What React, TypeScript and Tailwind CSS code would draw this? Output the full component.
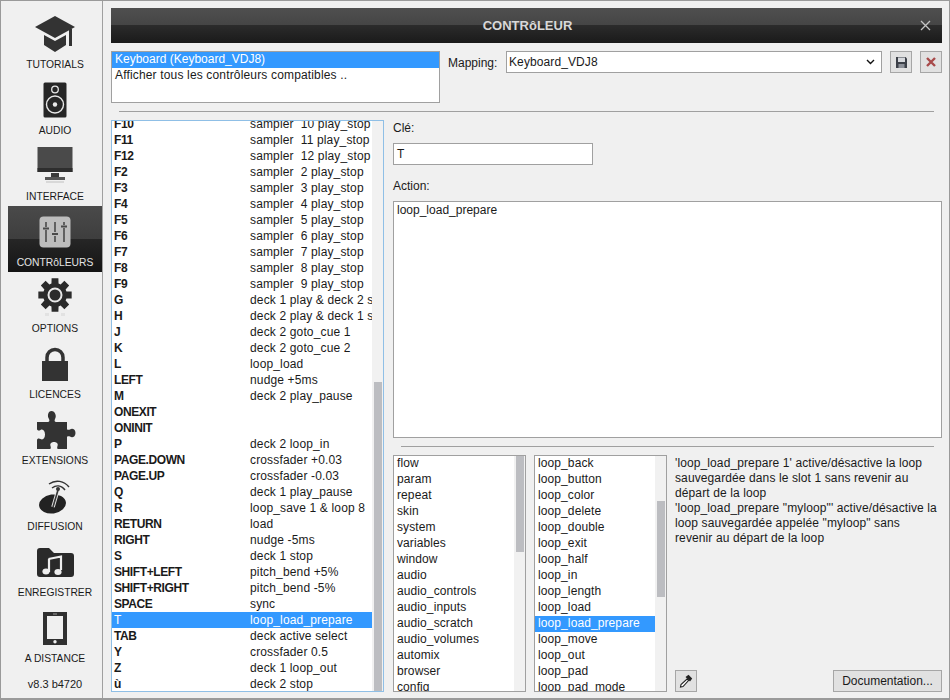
import type { ReactNode } from "react";

const keyRows: [string, string][] = [
	["F10", "sampler  10 play_stop"],
	["F11", "sampler  11 play_stop"],
	["F12", "sampler  12 play_stop"],
	["F2", "sampler  2 play_stop"],
	["F3", "sampler  3 play_stop"],
	["F4", "sampler  4 play_stop"],
	["F5", "sampler  5 play_stop"],
	["F6", "sampler  6 play_stop"],
	["F7", "sampler  7 play_stop"],
	["F8", "sampler  8 play_stop"],
	["F9", "sampler  9 play_stop"],
	["G", "deck 1 play & deck 2 stop"],
	["H", "deck 2 play & deck 1 stop"],
	["J", "deck 2 goto_cue 1"],
	["K", "deck 2 goto_cue 2"],
	["L", "loop_load"],
	["LEFT", "nudge +5ms"],
	["M", "deck 2 play_pause"],
	["ONEXIT", ""],
	["ONINIT", ""],
	["P", "deck 2 loop_in"],
	["PAGE.DOWN", "crossfader +0.03"],
	["PAGE.UP", "crossfader -0.03"],
	["Q", "deck 1 play_pause"],
	["R", "loop_save 1 & loop 8"],
	["RETURN", "load"],
	["RIGHT", "nudge -5ms"],
	["S", "deck 1 stop"],
	["SHIFT+LEFT", "pitch_bend +5%"],
	["SHIFT+RIGHT", "pitch_bend -5%"],
	["SPACE", "sync"],
	["T", "loop_load_prepare"],
	["TAB", "deck active select"],
	["Y", "crossfader 0.5"],
	["Z", "deck 1 loop_out"],
	["ù", "deck 2 stop"],
];

const groups = ["flow", "param", "repeat", "skin", "system", "variables", "window", "audio", "audio_controls", "audio_inputs", "audio_scratch", "audio_volumes", "automix", "browser", "config"];

const verbs = ["loop_back", "loop_button", "loop_color", "loop_delete", "loop_double", "loop_exit", "loop_half", "loop_in", "loop_length", "loop_load", "loop_load_prepare", "loop_move", "loop_out", "loop_pad", "loop_pad_mode"];

const dark = "#333333";

const gearPath = (() => {
	let d = "";
	for (let i = 0; i < 8; i++) {
		const a = (i * Math.PI) / 4;
		const pts: [number, number][] = [
			[a - 0.3, 12],
			[a - 0.2, 17],
			[a + 0.2, 17],
			[a + 0.3, 12],
		];
		pts.forEach(([t, r]) => {
			d += `${d ? "L" : "M"}${(17 + r * Math.sin(t)).toFixed(2)} ${(17 - r * Math.cos(t)).toFixed(2)}`;
		});
	}
	return d + "Z";
})();

const navItems: { label: string; icon: ReactNode; active?: boolean }[] = [
	{
		label: "TUTORIALS",
		icon: (
			<svg width="40" height="36" viewBox="0 0 40 36">
				<path d="M20 0 40 11 20 22 0 11Z" fill={dark} />
				<path d="M9 19 20 25 31 19V29L20 36 9 29Z" fill={dark} />
				<rect x="34" y="13" width="3" height="17" fill={dark} />
			</svg>
		),
	},
	{
		label: "AUDIO",
		icon: (
			<svg width="24" height="36" viewBox="0 0 24 36">
				<rect width="23" height="35" x="0.5" y="0.5" rx="1.5" fill="#262626" />
				<circle cx="12" cy="7.5" r="3.3" fill="none" stroke="#e8e8e8" strokeWidth="1.3" />
				<circle cx="12" cy="22.5" r="8.5" fill="none" stroke="#e8e8e8" strokeWidth="1.4" />
				<circle cx="12" cy="22.5" r="2.2" fill="#e8e8e8" />
			</svg>
		),
	},
	{
		label: "INTERFACE",
		icon: (
			<svg width="36" height="38" viewBox="0 0 36 38">
				<rect x="0.5" y="0" width="35" height="25" fill="#4a4a4a" />
				<rect x="0.5" y="21" width="35" height="4" fill="#2e2e2e" />
				<rect x="14" y="26" width="8" height="4" fill="#3a3a3a" />
				<rect x="8" y="30" width="20" height="3" fill="#555555" />
				<rect x="9" y="34" width="18" height="2" fill="#d8d8d8" />
			</svg>
		),
	},
	{
		label: "CONTRôLEURS",
		active: true,
		icon: (
			<svg width="32" height="32" viewBox="0 0 32 32">
				<rect width="31" height="31" x="0.5" y="0.5" rx="4" fill="#bdbdbd" />
				<g stroke="#4a4a4a" strokeWidth="1.6">
					<path d="M7 6v5M7 14v12M16 6v10M16 20v6M25 6v3M25 12v14" />
					<path d="M4 12.500h6M13 18h6M22 10.500h6" strokeWidth="2.200" />
				</g>
			</svg>
		),
	},
	{
		label: "OPTIONS",
		icon: (
			<svg width="34" height="40" viewBox="0 0 34 40">
				<path d={gearPath} fill="#2b2b2b" />
				<circle cx="17" cy="17" r="10" fill="#2b2b2b" />
				<circle cx="17" cy="17" r="6.500" fill="none" stroke="#e8e8e8" strokeWidth="2" />
				<rect x="7" y="35" width="4" height="3" fill="#e2e2e2" />
				<rect x="23" y="35" width="4" height="3" fill="#e2e2e2" />
			</svg>
		),
	},
	{
		label: "LICENCES",
		icon: (
			<svg width="28" height="34" viewBox="0 0 28 34">
				<path d="M6 15V10.500a8 8 0 0 1 16 0V15" fill="none" stroke="#333333" strokeWidth="3.500" />
				<rect x="1" y="14" width="26" height="20" fill={dark} />
			</svg>
		),
	},
	{
		label: "EXTENSIONS",
		icon: (
			<svg width="42" height="40" viewBox="0 0 42 40">
				<path
					d="M3 12H14C15 12 16 11 15 9 13 6 14 1 17.500 1 21 1 23 6 21 9 20 11 21 12 22 12H33V19C33 20 35 20 36 19.500 38 18 41.500 19 41.500 23 41.500 27 38 28 36 26.500 35 26 33 26 33 27V39H24C23 39 23 37.500 23.500 36 24.500 33 22 32 20 32 18 32 15.500 33 16.500 36 17 37.500 17 39 16 39H3V30C3 28.500 5 28 6.500 29 9 30.500 11 28 11 24.500 11 21 9 18.500 6.500 20 5 21 3 20.500 3 19Z"
					fill={dark}
				/>
			</svg>
		),
	},
	{
		label: "DIFFUSION",
		icon: (
			<svg width="34" height="38" viewBox="0 0 34 38">
				<ellipse cx="14.500" cy="27" rx="13.500" ry="9.500" fill="#222222" transform="rotate(-8 14.500 27)" />
				<path d="M15 30 20 13" stroke="#e8e8e8" strokeWidth="3.500" />
				<path d="M15 30 20 13" stroke="#333333" strokeWidth="1.600" />
				<circle cx="20" cy="12" r="2" fill="#333333" />
				<path d="M11 7C18 2 26 4 31 10" fill="none" stroke="#333333" strokeWidth="1.500" />
				<path d="M14 11C18 8 23 8 27 13" fill="none" stroke="#333333" strokeWidth="1.500" />
			</svg>
		),
	},
	{
		label: "ENREGISTRER",
		icon: (
			<svg width="37" height="29" viewBox="0 0 37 29">
				<path d="M0 3Q0 0 3 0H12L17 5H34Q37 5 37 8V26Q37 29 34 29H3Q0 29 0 26Z" fill="#2a2a2a" />
				<path d="M11.500 11 24 8.500V22" fill="none" stroke="#eeeeee" strokeWidth="2.200" />
				<path d="M12 11V24" stroke="#eeeeee" strokeWidth="2.200" />
				<ellipse cx="9" cy="23.500" rx="3.600" ry="3" fill="#eeeeee" />
				<ellipse cx="21" cy="24" rx="3.600" ry="3" fill="#eeeeee" />
			</svg>
		),
	},
	{
		label: "A DISTANCE",
		icon: (
			<svg width="24" height="33" viewBox="0 0 24 33">
				<rect width="24" height="33" fill="#303030" />
				<rect x="4" y="4" width="16" height="23" fill="#f0f0f0" />
				<circle cx="12" cy="29.800" r="1.700" fill="#f0f0f0" />
				<rect x="10" y="1.500" width="4" height="1" fill="#999999" />
			</svg>
		),
	},
];

function NavItem({ label, icon, active }: { label: string; icon: ReactNode; active?: boolean }) {
	return (
		<div
			className={`flex h-[66px] flex-col items-center justify-between pb-[3px] text-[10.3px] leading-[13px] ${
				active ? "bg-[linear-gradient(#4a4a4a_0,#3e3e3e_50%,#262626_50%,#141414_100%)] text-[#e4e4e4]" : "text-[#1a1a1a]"
			}`}
		>
			<div className="flex h-[48px] items-center justify-center pt-[4px]">{icon}</div>
			<span>{label}</span>
		</div>
	);
}

function Scrollbar({ top, height }: { top: number; height: number }) {
	return (
		<div className="w-[11px] shrink-0 bg-[#f1f1f1] pl-[2px] pr-[1px]">
			<div className="bg-[#bcbdc1]" style={{ marginTop: top, height }} />
		</div>
	);
}

function SimpleList({ items, selected, thumbTop, thumbHeight }: { items: string[]; selected?: string; thumbTop: number; thumbHeight: number }) {
	return (
		<div className="flex h-[237px] w-[133px] overflow-hidden border border-[#a0a0a0] bg-white tracking-[0.1px]">
			<div className="min-w-0 flex-1">
				{items.map((item) => (
					<div key={item} className={`h-[16px] pl-[3px] leading-[15px] ${item === selected ? "bg-[#3399ff] text-white" : ""}`}>
						{item}
					</div>
				))}
			</div>
			<Scrollbar top={thumbTop} height={thumbHeight} />
		</div>
	);
}

function SquareButton({ children }: { children: ReactNode }) {
	return (
		<button className="flex h-[22px] w-[22px] items-center justify-center border border-[#a6a6a6] bg-[#e1e1e1]">
			{children}
		</button>
	);
}

export default function App() {
	return (
		<div className="flex h-[700px] w-[950px] overflow-hidden border-t border-l border-r border-b-2 border-[#9a9a9a] bg-[#f0f0f0] font-['Liberation_Sans',Arial,sans-serif] text-[12px] text-[#1a1a1a]">
			<aside className="flex w-[102px] shrink-0 flex-col border-r border-[#a0a0a0] pl-[7px] pt-[7px]">
				{navItems.map((item) => (
					<NavItem key={item.label} {...item} />
				))}
				<div className="pt-[10px] text-center text-[11px] leading-[13px]">v8.3 b4720</div>
			</aside>

			<main className="flex min-w-0 flex-1 flex-col pl-[8px] pr-[7px] pt-[7px]">
				<header className="relative flex h-[35px] shrink-0 items-center justify-center bg-[linear-gradient(#4f4f4f_0,#454545_50%,#2b2b2b_50%,#1a1a1a_100%)] pl-[2px] text-[13px] font-bold text-[#d8d8d8]">
					CONTRôLEUR
					<svg className="absolute right-[11px] top-[12px]" width="11" height="11" viewBox="0 0 11 11">
						<path d="M1 1 10 10M10 1 1 10" stroke="#c4c4c4" strokeWidth="1.300" />
					</svg>
				</header>

				<div className="mt-[8px] flex h-[52px] shrink-0">
					<div className="h-[52px] w-[329px] border border-[#a0a0a0] bg-white">
						<div className="h-[16px] bg-[#3399ff] pl-[3px] leading-[15px] text-white">Keyboard (Keyboard_VDJ8)</div>
						<div className="h-[16px] pl-[3px] leading-[15px] tracking-[0.16px]">Afficher tous les contrôleurs compatibles ..</div>
					</div>
					<span className="ml-[8px] w-[58px] pt-[3px]">Mapping:</span>
					<div className="flex h-[22px] w-[376px] items-center justify-between border border-[#a0a0a0] bg-white pl-[2px] pr-[6px]">
						<span className="tracking-[0.1px]">Keyboard_VDJ8</span>
						<svg width="9" height="6" viewBox="0 0 9 6">
							<path d="M1 1 4.500 4.500 8 1" fill="none" stroke="#111111" strokeWidth="1.400" />
						</svg>
					</div>
					<div className="ml-[8px]">
						<SquareButton>
							<svg width="11" height="11" viewBox="0 0 11 11">
								<path d="M0 0H9.500L11 1.500V11H0Z" fill="#3c4048" />
								<rect x="2" y="0.500" width="7" height="4.500" fill="#d6d8dc" />
								<rect x="2.500" y="7" width="6" height="4" fill="#8c9098" />
							</svg>
						</SquareButton>
					</div>
					<div className="ml-[8px]">
						<SquareButton>
							<svg width="10" height="10" viewBox="0 0 10 10">
								<path d="M1 1 9 9M9 1 1 9" stroke="#a84a4a" strokeWidth="2.400" />
							</svg>
						</SquareButton>
					</div>
				</div>

				<div className="mx-[8px] mt-[8px] h-px shrink-0 bg-[#a0a0a0]" />

				<div className="mt-[8px] flex min-h-0 flex-1 pb-[6px]">
					<div className="flex h-[572px] w-[273px] shrink-0 overflow-hidden border border-[#8fbfe6] bg-white">
						<div className="min-w-0 flex-1 overflow-hidden">
							<div className="-mt-[5px]">
								{keyRows.map(([key, action]) => (
									<div key={key} className={`flex h-[16px] whitespace-pre pl-[2px] leading-[17px] ${key === "T" ? "bg-[#3399ff] text-white" : ""}`}>
										<span className={`w-[136px] shrink-0 ${key === "T" ? "font-normal" : "font-bold tracking-[-0.4px]"}`}>{key}</span>
										<span className="tracking-[0.15px]">{action}</span>
									</div>
								))}
							</div>
						</div>
						<Scrollbar top={261} height={309} />
					</div>

					<div className="ml-[9px] flex min-w-0 flex-1 flex-col">
						<div className="h-[15px] leading-[17px]">Clé:</div>
						<div className="mt-[8px] h-[22px] w-[200px] border border-[#a0a0a0] bg-white pl-[3px] text-[12px] leading-[20px]">T</div>
						<div className="mt-[14px] h-[15px] leading-[15px]">Action:</div>
						<div className="mt-[7px] h-[238px] border border-[#a0a0a0] bg-white pl-[3px] leading-[16px]">loop_load_prepare</div>
						<div className="mx-[8px] mt-[8px] h-px shrink-0 bg-[#a0a0a0]" />
						<div className="mt-[8px] flex">
							<SimpleList items={groups} thumbTop={0} thumbHeight={96} />
							<div className="ml-[8px]">
								<SimpleList items={verbs} selected="loop_load_prepare" thumbTop={45} thumbHeight={96} />
							</div>
							<div className="ml-[8px] flex min-w-0 flex-1 flex-col justify-between pt-[1px]">
								<p className="leading-[15px] tracking-[0.11px]">
									'loop_load_prepare 1' active/désactive la loop<br />
									sauvegardée dans le slot 1 sans revenir au<br />
									départ de la loop<br />
									'loop_load_prepare "myloop"' active/désactive la<br />
									loop sauvegardée appelée "myloop" sans<br />
									revenir au départ de la loop
								</p>
								<div className="flex items-center justify-between">
									<SquareButton>
										<svg width="14" height="14" viewBox="0 0 14 14">
											<path d="M8 5 9.500 6.500 4 12.500 1.500 13 2 10.500Z" fill="#ffffff" stroke="#222222" strokeWidth="1.100" />
											<path d="M9.500 0.800 13.200 4.500 11 7.500 6.500 3Z" fill="#222222" />
										</svg>
									</SquareButton>
									<button className="h-[22px] w-[109px] border border-[#a6a6a6] bg-[#e1e1e1]">Documentation...</button>
								</div>
							</div>
						</div>
					</div>
				</div>
			</main>
		</div>
	);
}
